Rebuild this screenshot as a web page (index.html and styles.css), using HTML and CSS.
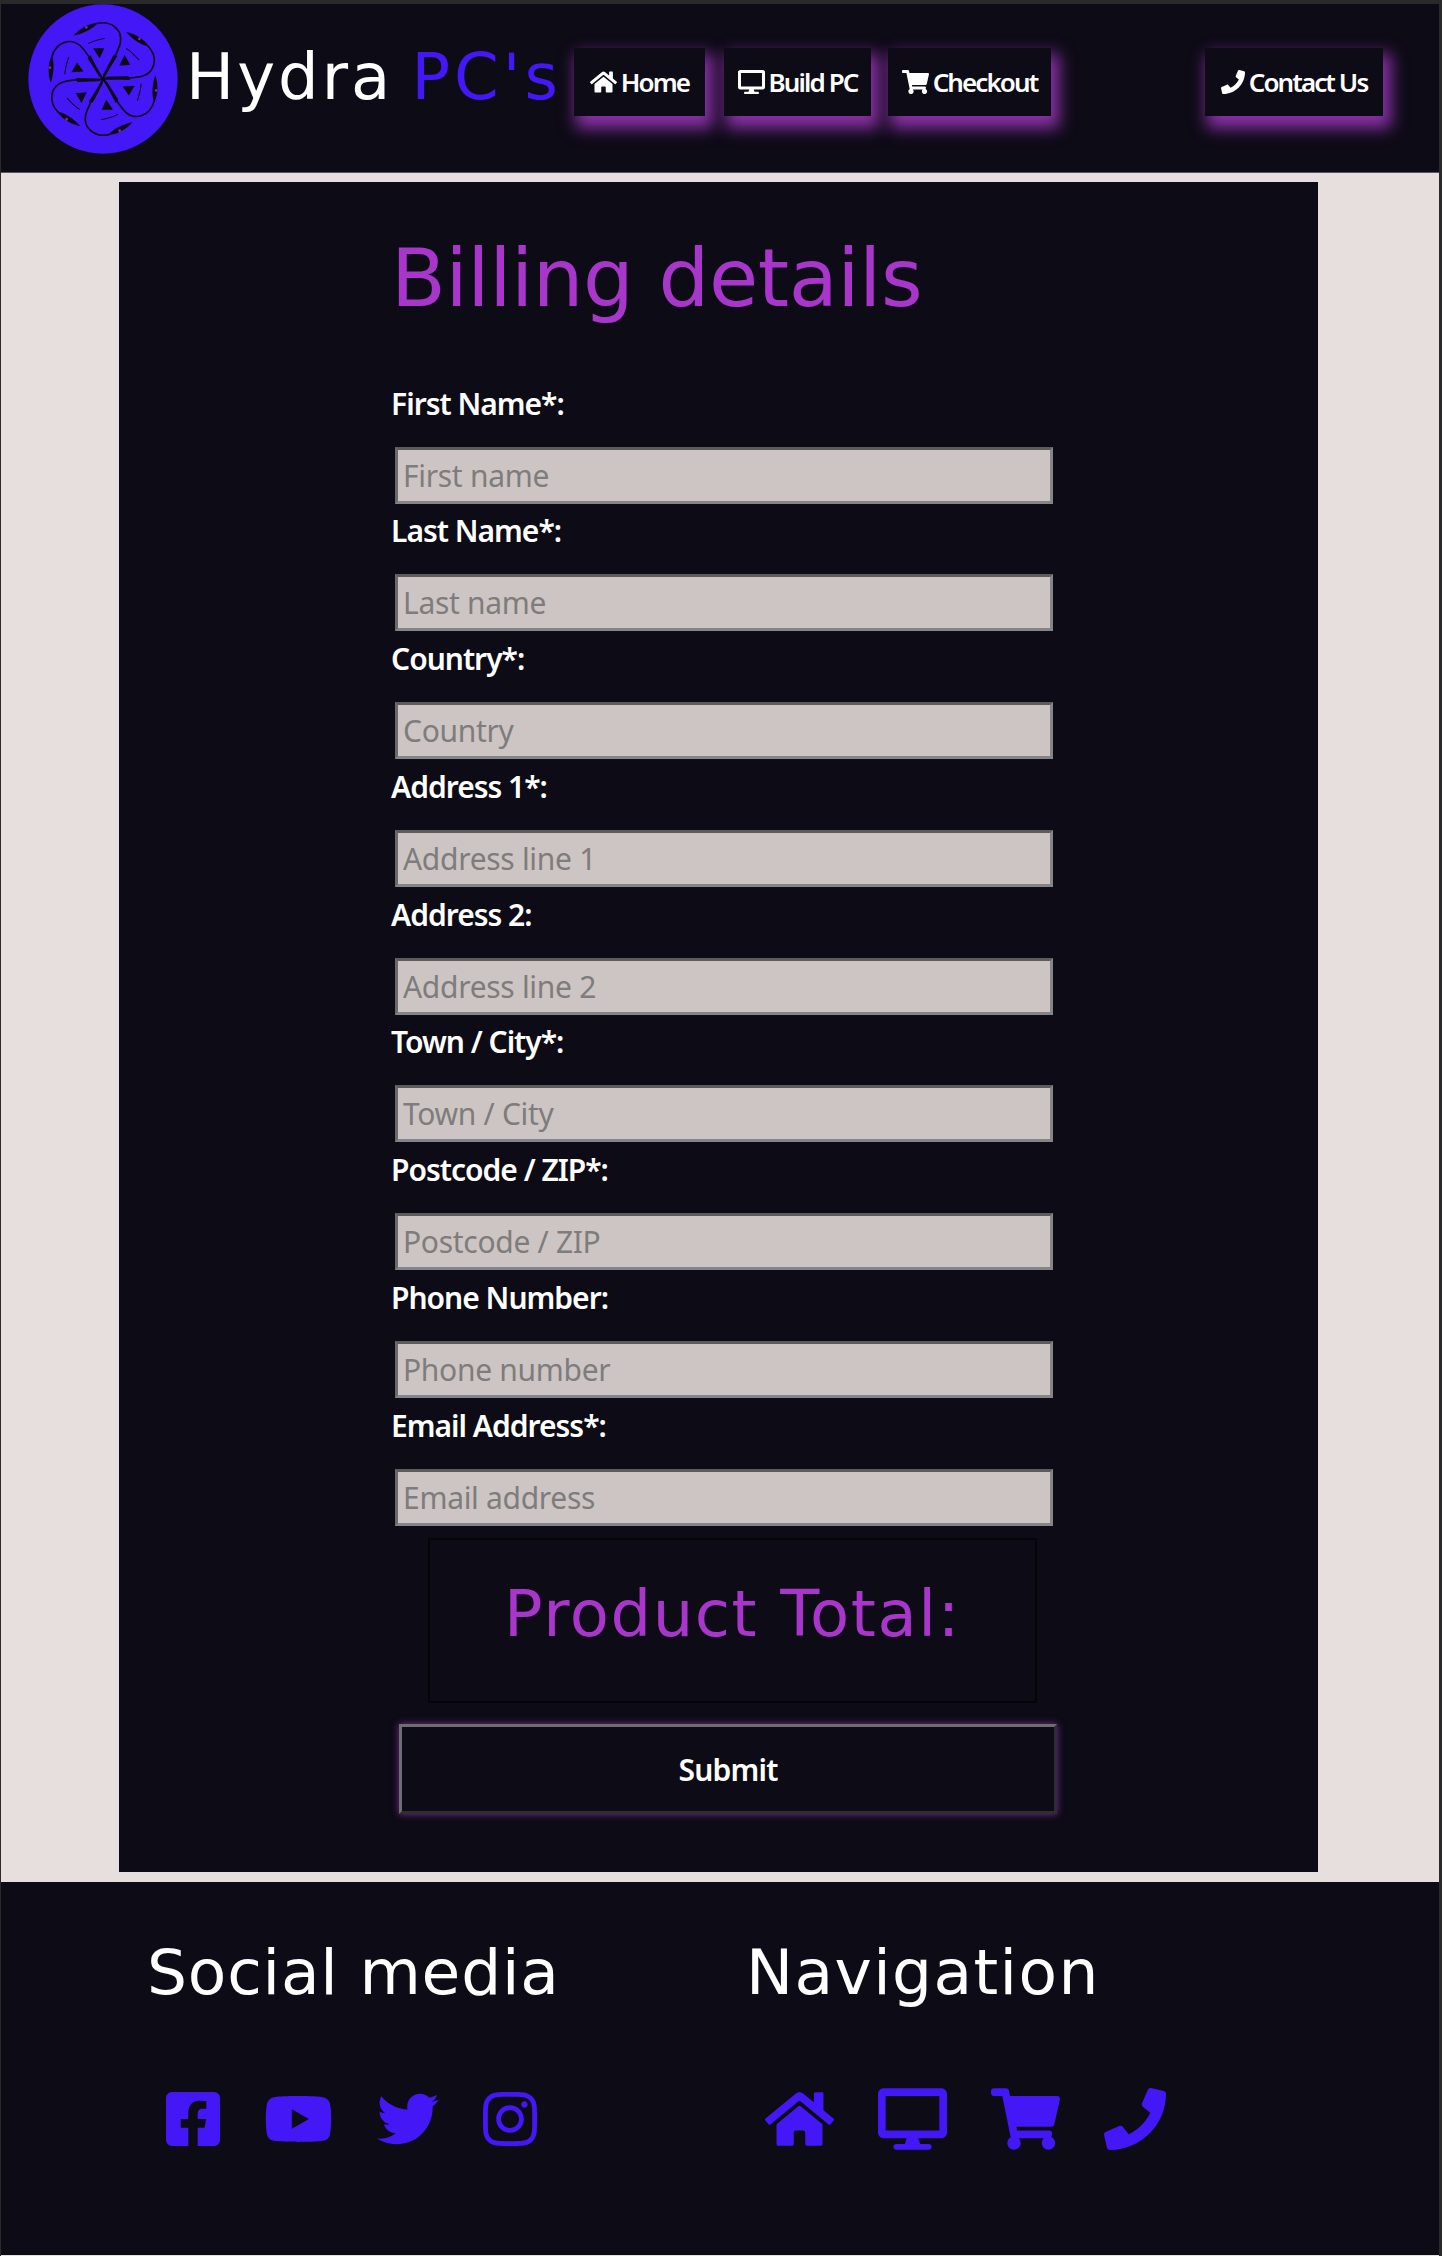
FILE: index.html
```html
<!DOCTYPE html>
<html lang="en">
<head>
<meta charset="utf-8">
<title>Hydra PC's - Checkout</title>
<link rel="stylesheet" href="styles.css">
</head>
<body>
<svg class="defs" aria-hidden="true">
  <defs>
    <symbol id="i-home" viewBox="0 0 576 512"><path d="M280.37 148.26L96 300.11V464a16 16 0 0 0 16 16l112.06-.29a16 16 0 0 0 15.92-16V368a16 16 0 0 1 16-16h64a16 16 0 0 1 16 16v95.64a16 16 0 0 0 16 16.05L464 480a16 16 0 0 0 16-16V300L295.67 148.26a12.19 12.19 0 0 0-15.3 0zM571.6 251.47L488 182.56V44.05a12 12 0 0 0-12-12h-56a12 12 0 0 0-12 12v72.61L318.47 43a48 48 0 0 0-61 0L4.34 251.47a12 12 0 0 0-1.6 16.9l25.5 31A12 12 0 0 0 45.15 301l235.22-193.74a12.19 12.19 0 0 1 15.3 0L530.9 301a12 12 0 0 0 16.9-1.6l25.5-31a12 12 0 0 0-1.7-16.93z"/></symbol>
    <symbol id="i-desktop" viewBox="0 0 576 512"><path d="M528 0H48C21.5 0 0 21.5 0 48v320c0 26.5 21.5 48 48 48h192l-16 48h-72c-13.3 0-24 10.7-24 24s10.7 24 24 24h272c13.3 0 24-10.7 24-24s-10.7-24-24-24h-72l-16-48h192c26.5 0 48-21.5 48-48V48c0-26.5-21.5-48-48-48zm-16 352H64V64h448v288z"/></symbol>
    <symbol id="i-cart" viewBox="0 0 576 512"><path d="M528.12 301.319l47.273-208C578.806 78.301 567.391 64 551.99 64H159.208l-9.166-44.81C147.758 8.021 137.93 0 126.529 0H24C10.745 0 0 10.745 0 24v16c0 13.255 10.745 24 24 24h69.883l70.248 343.435C147.325 417.1 136 435.222 136 456c0 30.928 25.072 56 56 56s56-25.072 56-56c0-15.674-6.447-29.835-16.824-40h209.647C430.447 426.165 424 440.326 424 456c0 30.928 25.072 56 56 56s56-25.072 56-56c0-22.172-12.888-41.332-31.579-50.405l5.517-24.276c3.413-15.018-8.002-29.319-23.403-29.319H218.117l-6.545-32h293.145c11.206 0 20.92-7.754 23.403-18.681z"/></symbol>
    <symbol id="i-phone" viewBox="0 0 512 512"><path d="M493.4 24.6l-104-24c-11.3-2.6-22.9 3.3-27.5 13.9l-48 112c-4.2 9.8-1.4 21.3 6.9 28l60.6 49.6c-36 76.7-98.9 140.5-177.2 177.2l-49.6-60.6c-6.8-8.3-18.2-11.1-28-6.9l-112 48C3.9 366.5-2 378.1.6 389.4l24 104C27.1 504.2 36.7 512 48 512c256.1 0 464-207.5 464-464 0-11.2-7.7-20.9-18.6-23.4z"/></symbol>
    <symbol id="i-fb" viewBox="0 0 448 512"><path d="M400 32H48A48 48 0 0 0 0 80v352a48 48 0 0 0 48 48h137.25V327.69h-63V256h63v-54.64c0-62.15 37-96.48 93.67-96.48 27.14 0 55.52 4.84 55.52 4.84v61h-31.27c-30.81 0-40.42 19.12-40.42 38.73V256h68.78l-11 71.69h-57.78V480H400a48 48 0 0 0 48-48V80a48 48 0 0 0-48-48z"/></symbol>
    <symbol id="i-yt" viewBox="0 0 576 512"><path d="M549.655 124.083c-6.281-23.65-24.787-42.276-48.284-48.597C458.781 64 288 64 288 64S117.22 64 74.629 75.486c-23.497 6.322-42.003 24.947-48.284 48.597-11.412 42.867-11.412 132.305-11.412 132.305s0 89.438 11.412 132.305c6.281 23.65 24.787 41.5 48.284 47.821C117.22 448 288 448 288 448s170.78 0 213.371-11.486c23.497-6.321 42.003-24.171 48.284-47.821 11.412-42.867 11.412-132.305 11.412-132.305s0-89.438-11.412-132.305zm-317.51 213.508V175.185l142.739 81.205-142.739 81.201z"/></symbol>
    <symbol id="i-tw" viewBox="0 0 512 512"><path d="M459.37 151.716c.325 4.548.325 9.097.325 13.645 0 138.72-105.583 298.558-298.558 298.558-59.452 0-114.68-17.219-161.137-47.106 8.447.974 16.568 1.299 25.34 1.299 49.055 0 94.213-16.568 130.274-44.832-46.132-.975-84.792-31.188-98.112-72.772 6.498.974 12.995 1.624 19.818 1.624 9.421 0 18.843-1.3 27.614-3.573-48.081-9.747-84.143-51.98-84.143-102.985v-1.299c13.969 7.797 30.214 12.67 47.431 13.319-28.264-18.843-46.781-51.005-46.781-87.391 0-19.492 5.197-37.36 14.294-52.954 51.655 63.675 129.3 105.258 216.365 109.807-1.624-7.797-2.599-15.918-2.599-24.04 0-57.828 46.782-104.934 104.934-104.934 30.213 0 57.502 12.67 76.67 33.137 23.715-4.548 46.456-13.32 66.599-25.34-7.798 24.366-24.366 44.833-46.132 57.827 21.117-2.273 41.584-8.122 60.426-16.243-14.292 20.791-32.161 39.308-52.628 54.253z"/></symbol>
    <symbol id="i-ig" viewBox="0 0 448 512"><path d="M224.1 141c-63.6 0-114.9 51.3-114.9 114.9s51.3 114.9 114.9 114.9S339 319.5 339 255.9 287.7 141 224.1 141zm0 189.6c-41.1 0-74.7-33.5-74.7-74.7s33.5-74.7 74.7-74.7 74.7 33.5 74.7 74.7-33.6 74.7-74.7 74.7zm146.4-194.3c0 14.9-12 26.8-26.8 26.8-14.9 0-26.8-12-26.8-26.8s12-26.8 26.8-26.8 26.8 12 26.8 26.8zm76.1 27.2c-1.7-35.9-9.9-67.7-36.2-93.9-26.2-26.2-58-34.4-93.9-36.2-37-2.1-147.9-2.1-184.9 0-35.8 1.7-67.6 9.9-93.9 36.1s-34.4 58-36.2 93.9c-2.1 37-2.1 147.9 0 184.9 1.7 35.9 9.9 67.7 36.2 93.9s58 34.4 93.9 36.2c37 2.1 147.9 2.1 184.9 0 35.9-1.7 67.7-9.9 93.9-36.2 26.2-26.2 34.4-58 36.2-93.9 2.1-37 2.1-147.8 0-184.8zM398.8 388c-7.8 19.6-22.9 34.7-42.6 42.6-29.5 11.7-99.5 9-132.1 9s-102.7 2.6-132.1-9c-19.6-7.8-34.7-22.9-42.6-42.6-11.7-29.5-9-99.5-9-132.1s-2.6-102.7 9-132.1c7.8-19.6 22.9-34.7 42.6-42.6 29.5-11.7 99.5-9 132.1-9s102.7-2.6 132.1 9c19.6 7.8 34.7 22.9 42.6 42.6 11.7 29.5 9 99.5 9 132.1s2.7 102.7-9 132.1z"/></symbol>
    <g id="serpent">
      <path class="logo-fill" d="M-88 -130C-76 -146 -44 -168 -16 -168C-30 -150 -60 -136 -88 -130Z"/>
      <path class="logo-line" d="M-20 -166C26 -178 60 -146 52 -108C44 -74 14 -30 0 0"/>
      <path class="logo-fill" d="M-30 -92L4 -92L-10 -62Z"/>
      <path class="logo-fill" d="M0 2L-12 -8L-46 -62L-38 -72Z"/>
      <path class="logo-thin" d="M-45 -106C-30 -114 -14 -118 5 -122"/>
      <circle class="logo-dot" cx="-50" cy="-155" r="4"/>
    </g>
  </defs>
</svg>

<header class="site-header">
  <svg class="logo" viewBox="-225 -225 450 450" role="img" aria-label="Hydra PC's logo">
    <circle class="logo-disc" cx="0" cy="0" r="224"/>
    <use href="#serpent"/>
    <use href="#serpent" transform="rotate(60)"/>
    <use href="#serpent" transform="rotate(120)"/>
    <use href="#serpent" transform="rotate(180)"/>
    <use href="#serpent" transform="rotate(240)"/>
    <use href="#serpent" transform="rotate(300)"/>
  </svg>
  <h1 class="brand">Hydra <span class="brand-accent">PC's</span></h1>
  <nav class="main-nav">
    <a class="nav-btn nav-home" href="#"><svg class="nav-icon"><use href="#i-home"/></svg>Home</a>
    <a class="nav-btn nav-build" href="#"><svg class="nav-icon"><use href="#i-desktop"/></svg>Build PC</a>
    <a class="nav-btn nav-checkout" href="#"><svg class="nav-icon"><use href="#i-cart"/></svg>Checkout</a>
    <a class="nav-btn nav-contact" href="#"><svg class="nav-icon nav-icon-phone"><use href="#i-phone"/></svg>Contact Us</a>
  </nav>
</header>

<main class="panel">
  <form class="billing">
    <h2 class="billing-title">Billing details</h2>
    <div class="field"><label class="field-label" for="f1">First Name*:</label><input class="field-input" id="f1" placeholder="First name"></div>
    <div class="field"><label class="field-label" for="f2">Last Name*:</label><input class="field-input" id="f2" placeholder="Last name"></div>
    <div class="field"><label class="field-label" for="f3">Country*:</label><input class="field-input" id="f3" placeholder="Country"></div>
    <div class="field"><label class="field-label" for="f4">Address 1*:</label><input class="field-input" id="f4" placeholder="Address line 1"></div>
    <div class="field"><label class="field-label" for="f5">Address 2:</label><input class="field-input" id="f5" placeholder="Address line 2"></div>
    <div class="field"><label class="field-label" for="f6">Town / City*:</label><input class="field-input" id="f6" placeholder="Town / City"></div>
    <div class="field"><label class="field-label" for="f7">Postcode / ZIP*:</label><input class="field-input" id="f7" placeholder="Postcode / ZIP"></div>
    <div class="field"><label class="field-label" for="f8">Phone Number:</label><input class="field-input" id="f8" placeholder="Phone number"></div>
    <div class="field"><label class="field-label" for="f9">Email Address*:</label><input class="field-input" id="f9" placeholder="Email address"></div>
    <div class="total-box"><h2 class="total-title">Product Total:</h2></div>
    <button class="submit" type="button">Submit</button>
  </form>
</main>

<footer class="site-footer">
  <section class="foot-col foot-social">
    <h3 class="foot-title">Social media</h3>
    <div class="foot-icons">
      <svg class="fi fi-448"><use href="#i-fb"/></svg>
      <svg class="fi fi-576"><use href="#i-yt"/></svg>
      <svg class="fi fi-512"><use href="#i-tw"/></svg>
      <svg class="fi fi-448"><use href="#i-ig"/></svg>
    </div>
  </section>
  <section class="foot-col foot-nav">
    <h3 class="foot-title foot-title-nav">Navigation</h3>
    <div class="foot-icons">
      <svg class="fi fi-576"><use href="#i-home"/></svg>
      <svg class="fi fi-576"><use href="#i-desktop"/></svg>
      <svg class="fi fi-576"><use href="#i-cart"/></svg>
      <svg class="fi fi-512"><use href="#i-phone"/></svg>
    </div>
  </section>
</footer>
</body>
</html>
```
FILE: styles.css
```css
* { box-sizing: border-box; }
html, body { margin: 0; padding: 0; }
body {
  width: 1442px;
  min-height: 2256px;
  background: #e6dfdd;
  border-top: 4px solid #2a2a2a;
  border-left: 1px solid #2a2a2a;
  border-right: 3px solid #2a2a2a;
  font-family: "Noto Sans", sans-serif;
  color: #fff;
}
.defs { width: 0; height: 0; display: block; }

.site-header {
  height: 169px;
  background: #0d0b16;
  border-bottom: 1px solid #5a5660;
  display: flex;
  align-items: flex-start;
  padding-left: 27px;
}
.logo { width: 150px; height: 150px; flex: none; }
.logo-disc { fill: #4317f6; }
.logo-fill { fill: #0d0b16; }
.logo-line { fill: none; stroke: #0d0b16; stroke-width: 5; }
.logo-thin { fill: none; stroke: #0d0b16; stroke-width: 3; }
.logo-dot { fill: #7a2f96; }

.brand {
  margin: 37px 0 0 8px;
  font: 400 64px/72px "DejaVu Sans", sans-serif;
  letter-spacing: 3px;
  word-spacing: -5px;
  white-space: nowrap;
  width: 388px;
  flex: none;
}
.brand-accent { color: #4317f6; letter-spacing: 4px; }

.main-nav { display: flex; margin-top: 44px; }
.nav-btn {
  height: 68px;
  display: flex;
  align-items: center;
  justify-content: center;
  gap: 4px;
  background: #0d0b16;
  color: #fff;
  text-decoration: none;
  font-size: 26px;
  font-weight: 600;
  letter-spacing: -1.9px;
  white-space: nowrap;
  box-shadow: 5px 9px 15px 3px #8b32a8;
}
.nav-home { width: 131px; }
.nav-build { width: 147px; margin-left: 19px; }
.nav-checkout { width: 163px; margin-left: 17px; }
.nav-contact { width: 178px; margin-left: 154px; }
.nav-icon { width: 27px; height: 24px; fill: #fff; flex: none; }
.nav-icon-phone { width: 24px; }

.panel {
  width: 1199px;
  height: 1690px;
  margin: 9px 0 0 118px;
  background: #0d0b16;
  padding: 50px 0 0 272px;
}
.billing { width: 700px; }
.billing-title {
  margin: 0 0 56.5px;
  font: 400 80px/94px "DejaVu Sans", sans-serif;
  color: #a836cb;
  letter-spacing: -0.4px;
}
.field { height: 127.75px; display: flex; flex-direction: column; }
.field-label {
  display: block;
  height: 64px;
  font-size: 30px;
  line-height: 42px;
  font-weight: 600;
  letter-spacing: -1px;
}
.field-input {
  display: block;
  width: 658px;
  height: 57px;
  margin-left: 4px;
  padding: 0 5px;
  background: #cdc5c3;
  border: 3px solid #858585;
  border-top-color: #5c5c5c;
  border-left-color: #6a6a6a;
  font-family: inherit;
  font-size: 30px;
  letter-spacing: -0.3px;
  color: #222;
  border-radius: 0;
  outline: none;
}
.field-input::placeholder { color: #7f7c7c; opacity: 1; }
.total-box {
  width: 609px;
  height: 165px;
  margin: 6px 0 0 37px;
  border: 2px solid #050508;
  text-align: center;
  padding-top: 38px;
}
.total-title {
  margin: 0;
  font: 400 64px/72px "DejaVu Sans", sans-serif;
  color: #a836cb;
  letter-spacing: 1.6px;
  white-space: nowrap;
}
.submit {
  display: block;
  width: 658px;
  height: 90px;
  margin: 21px 0 0 8px;
  background: #0d0b16;
  color: #fff;
  border: 3px solid #2d2d33;
  border-top-color: #6e6e6e;
  border-left-color: #6e6e6e;
  box-shadow: 0 0 7px #7a2f96;
  font-family: inherit;
  font-size: 30px;
  font-weight: 600;
  letter-spacing: -0.8px;
  border-radius: 0;
}

.site-footer {
  height: 373px;
  margin-top: 10px;
  background: #0d0b16;
  display: flex;
  padding-left: 146px;
}
.foot-col { width: 599px; flex: none; }
.foot-title {
  margin: 53px 0 0;
  font: 400 63px/76px "DejaVu Sans", sans-serif;
  letter-spacing: 0.8px;
  color: #fff;
  white-space: nowrap;
}
.foot-title-nav { letter-spacing: 1.4px; }
.foot-icons { display: flex; gap: 44px; margin: 77px 0 0 19px; }
.fi { height: 62px; fill: #4317f6; flex: none; }
.fi-448 { width: 54px; }
.fi-512 { width: 62px; }
.fi-576 { width: 69px; }
```
